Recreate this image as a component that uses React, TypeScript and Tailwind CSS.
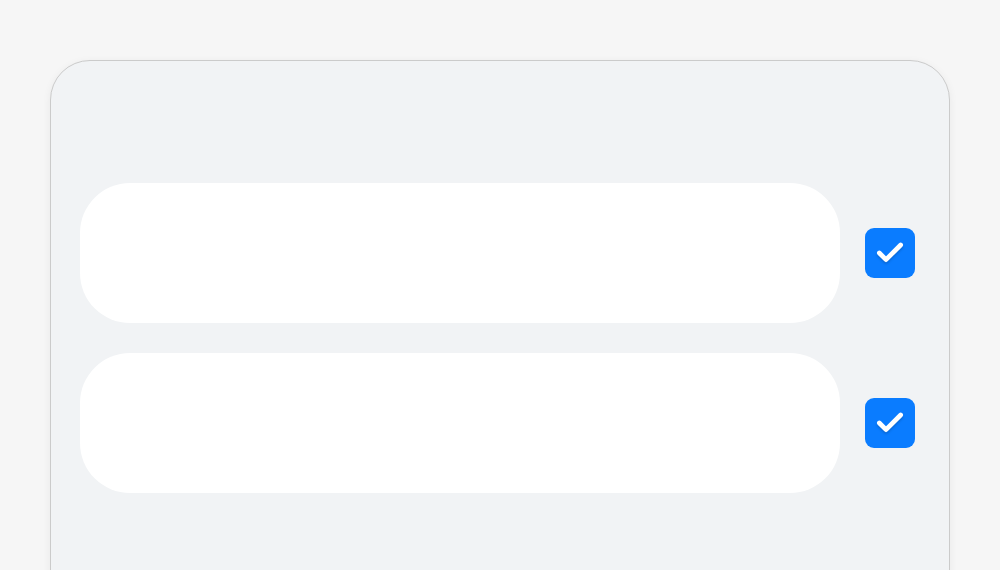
import { Check } from "lucide-react";

// ─── Sub-components ──────────────────────────────────────────────────────────

/** A blank pill row with a checked checkbox beside it. */
function CheckRow() {
  return (
    <div className="flex items-center gap-[25px]">
      <div className="h-[140px] flex-1 rounded-[50px] bg-white" />
      <div className="flex h-[50px] w-[50px] items-center justify-center rounded-[9px] bg-[#0a7cff]">
        <Check className="h-[32px] w-[32px] text-white drop-shadow-[0_2px_1px_rgba(0,0,0,0.15)]" strokeWidth={3.5} />
      </div>
    </div>
  );
}

// ─── Main component ──────────────────────────────────────────────────────────

export default function App() {
  return (
    <div className="h-[570px] w-[1000px] overflow-hidden bg-[#f6f6f6] pt-[60px] font-['Inter',sans-serif]">
      <div className="mx-[50px] h-[560px] rounded-[40px] border border-[#cbcbcb] bg-[#f1f3f5] pl-[29px] pr-[34px] pt-[122px] shadow-[0_2px_8px_rgba(0,0,0,0.06)]">
        <div className="flex flex-col gap-[30px]">
          <CheckRow />
          <CheckRow />
        </div>
      </div>
    </div>
  );
}
